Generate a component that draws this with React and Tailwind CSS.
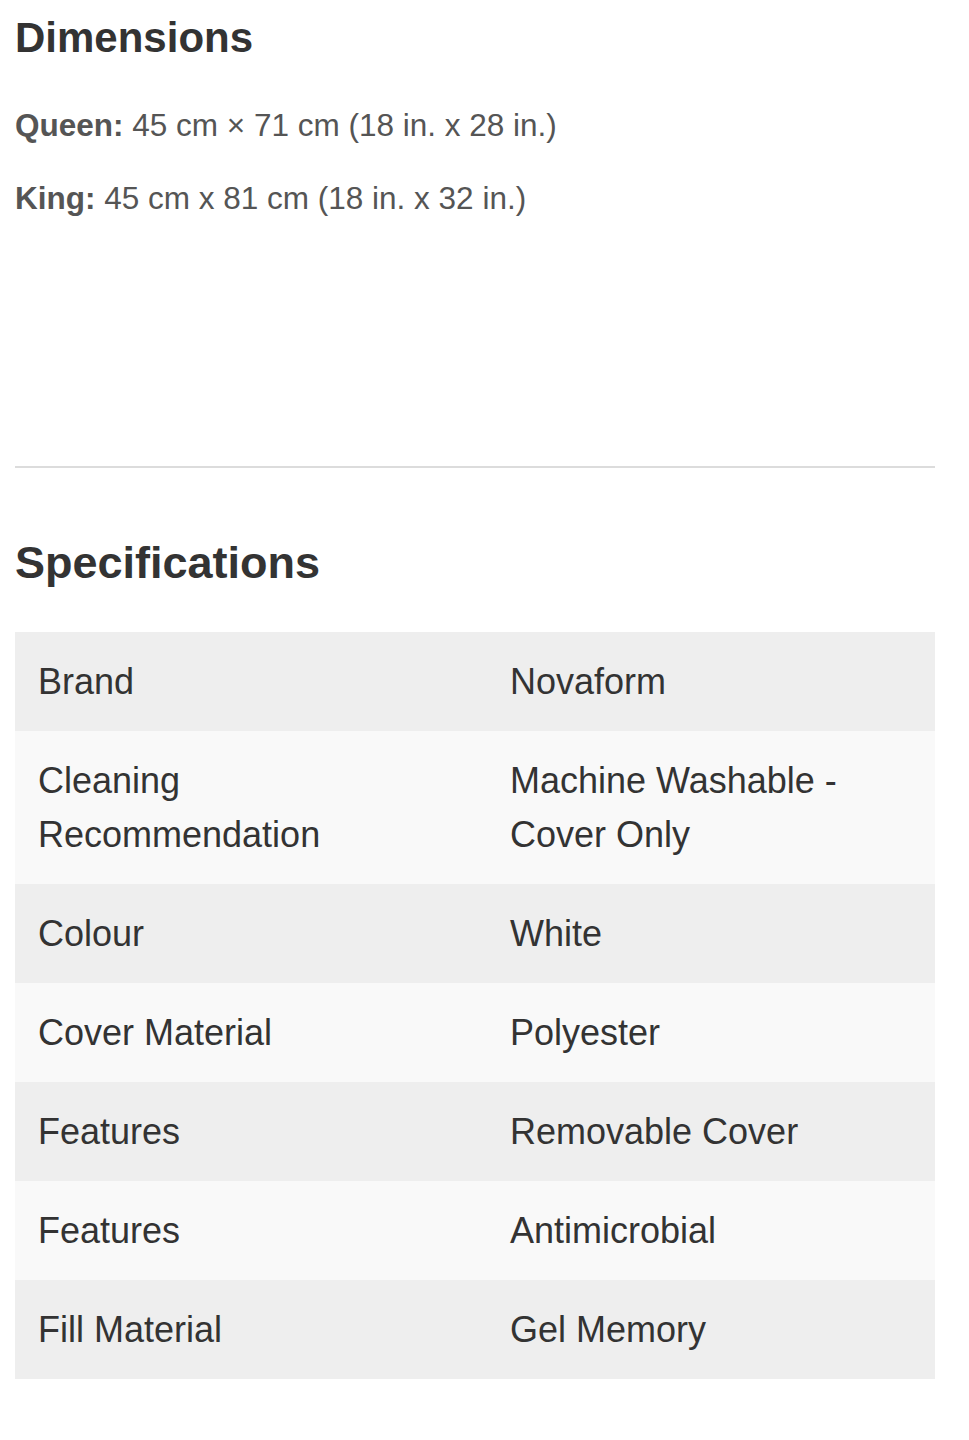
import React from 'react'

const specs = [
  ['Brand', 'Novaform'],
  ['Cleaning Recommendation', 'Machine Washable - Cover Only'],
  ['Colour', 'White'],
  ['Cover Material', 'Polyester'],
  ['Features', 'Removable Cover'],
  ['Features', 'Antimicrobial'],
  ['Fill Material', 'Gel Memory'],
]

const App = () => {
  return (
    <div className="min-h-[1440px] bg-white pl-[15px] pr-[34px] font-['Liberation_Sans',Arial,sans-serif]">
      <h2 className="pt-[13px] text-[42px] leading-[50px] font-bold text-[#333]">Dimensions</h2>

      <p className="mt-[39px] text-[31.5px] leading-[46px] text-[#555]">
        <span className="font-bold">Queen:</span> 45 cm × 71 cm (18 in. x 28 in.)
      </p>
      <p className="mt-[27px] text-[31.5px] leading-[46px] text-[#555]">
        <span className="font-bold">King:</span> 45 cm x 81 cm (18 in. x 32 in.)
      </p>

      <hr className="mt-[245px] border-0 h-[2px] bg-[#dcdcdc]" />

      <h2 className="mt-[69px] text-[45px] leading-[52px] font-bold text-[#333]">Specifications</h2>

      <div className="mt-[43px]">
        {specs.map(([label, value], i) => (
          <div
            key={i}
            className={`grid grid-cols-[472px_1fr] px-[23px] pt-[23px] pb-[22px] text-[36px] leading-[54px] text-[#333] ${
              i % 2 === 0 ? 'bg-[#eeeeee]' : 'bg-[#f9f9f9]'
            }`}
          >
            <div className="pr-[40px]">{label}</div>
            <div>{value}</div>
          </div>
        ))}
      </div>
    </div>
  )
}

export default App
